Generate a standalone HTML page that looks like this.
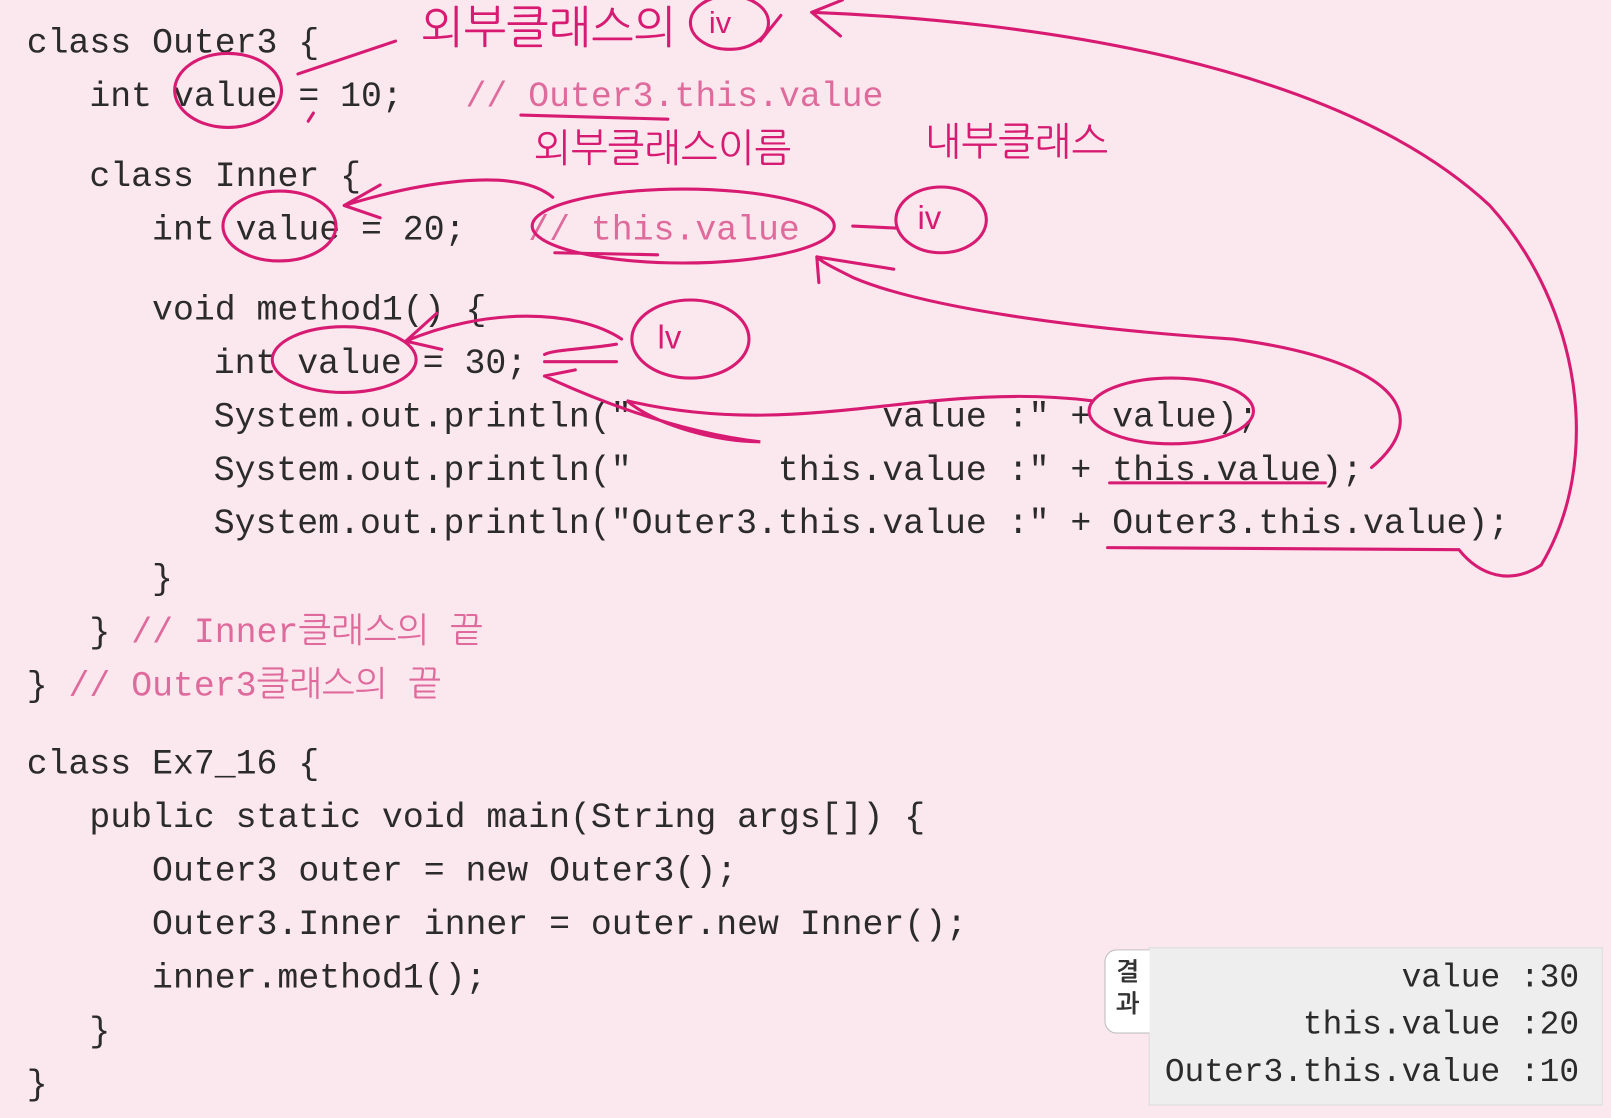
<!DOCTYPE html>
<html><head><meta charset="utf-8"><style>
html,body{margin:0;padding:0;width:1611px;height:1118px;overflow:hidden;background:#fbe7ee;}
#w{position:absolute;left:0;top:0;width:1568px;height:1088px;transform:scale(1.02742);transform-origin:0 0;}
.l{position:absolute;font-family:"Liberation Mono","NanumGothic",monospace;font-size:33.9px;color:#2b2b2b;white-space:pre;line-height:40px;height:40px;margin-top:3px;}
.c{color:#df6a9c;}
.h{position:absolute;font-family:"Liberation Sans","NanumGothic",sans-serif;color:#d81b72;white-space:pre;}
#res{position:absolute;left:1118px;top:922px;width:440px;height:152px;background:#eeeeee;border:1px solid #dcdcdc;}
#tab{position:absolute;left:1075px;top:924px;width:44px;height:82px;background:#fff;border:1px solid #bbb;border-right:none;border-radius:12px 0 0 12px;font-family:"NanumGothic",sans-serif;font-weight:bold;font-size:24px;line-height:31px;text-align:center;color:#333;padding-top:6px;box-sizing:border-box;}
.r{position:absolute;right:22px;font-family:"Liberation Mono",monospace;font-size:32px;color:#2b2b2b;white-space:pre;}
</style></head><body><div id="w">
<div class="l" style="left:26px;top:20px">class Outer3 {</div>
<div class="l" style="left:87px;top:72px">int value = 10;   <span class="c">// Outer3.this.value</span></div>
<div class="l" style="left:87px;top:150px">class Inner {</div>
<div class="l" style="left:148px;top:202px">int value = 20;   <span class="c">// this.value</span></div>
<div class="l" style="left:148px;top:280px">void method1() {</div>
<div class="l" style="left:208px;top:332px">int value = 30;</div>
<div class="l" style="left:208px;top:384px">System.out.println("            value :" + value);</div>
<div class="l" style="left:208px;top:436px">System.out.println("       this.value :" + this.value);</div>
<div class="l" style="left:208px;top:488px">System.out.println("Outer3.this.value :" + Outer3.this.value);</div>
<div class="l" style="left:148px;top:542px">}</div>
<div class="l" style="left:87px;top:594px">} <span class="c">// Inner클래스의 끝</span></div>
<div class="l" style="left:26px;top:646px">} <span class="c">// Outer3클래스의 끝</span></div>
<div class="l" style="left:26px;top:722px">class Ex7_16 {</div>
<div class="l" style="left:87px;top:774px">public static void main(String args[]) {</div>
<div class="l" style="left:148px;top:826px">Outer3 outer = new Outer3();</div>
<div class="l" style="left:148px;top:878px">Outer3.Inner inner = outer.new Inner();</div>
<div class="l" style="left:148px;top:930px">inner.method1();</div>
<div class="l" style="left:87px;top:982px">}</div>
<div class="l" style="left:26px;top:1034px">}</div>

<div id="res"><div class="r" style="top:10px">value :30</div><div class="r" style="top:56px">this.value :20</div><div class="r" style="top:102px">Outer3.this.value :10</div></div>
<div id="tab">결<br>과</div>

<div class="h" style="left:410px;top:0px;font-size:44px">외부클래스의</div>
<div class="h" style="left:520px;top:120px;font-size:38px">외부클래스이름</div>
<div class="h" style="left:900px;top:114px;font-size:38px">내부클래스</div>
<div class="h" style="left:690px;top:6px;font-size:30px">iv</div>
<div class="h" style="left:893px;top:194px;font-size:32px">iv</div>
<div class="h" style="left:640px;top:310px;font-size:32px">lv</div>

<svg style="position:absolute;left:0;top:0" width="1568" height="1088" viewBox="0 0 1568 1088" fill="none" stroke="#d81b72" stroke-width="3" stroke-linecap="round">
<ellipse cx="222" cy="88" rx="52" ry="36"/>
<path d="M290 72 L385 40"/>
<path d="M300 118 L305 110"/>
<ellipse cx="272" cy="220" rx="55" ry="34"/>
<ellipse cx="335" cy="350" rx="70" ry="32"/>
<ellipse cx="665" cy="220" rx="147" ry="36"/>
<ellipse cx="916" cy="214" rx="44" ry="32"/>
<ellipse cx="672" cy="330" rx="57" ry="38"/>
<ellipse cx="710" cy="22" rx="38" ry="26"/>
<ellipse cx="1140" cy="400" rx="80" ry="32"/>
<path d="M830 220 L872 222"/>
<path d="M507 112 L650 116"/>
<path d="M540 246 L640 248"/>
<path d="M538 192 C500 160 400 180 335 200 M335 200 L370 180 M335 200 L370 212"/>
<path d="M605 330 C560 300 470 300 395 332 M395 332 L425 305 M395 332 L430 340"/>
<path d="M600 352 L530 352 M600 335 C570 340 540 340 530 345"/>
<path d="M1062 390 C900 370 780 430 610 390 C640 415 700 430 740 430 C650 420 560 380 530 366 M530 366 L560 360"/>
<path d="M1335 455 C1400 400 1350 350 1200 330 C1050 320 900 300 830 270 C810 260 800 255 795 250 M795 250 L797 275 M795 250 L870 262"/>
<path d="M1080 470 L1290 470"/>
<path d="M1078 533 L1420 535 C1440 560 1470 570 1500 550 C1560 450 1540 300 1450 200 C1300 60 1000 20 790 12 M790 12 L820 0 M790 12 L818 35"/>
<path d="M740 40 L760 15"/>
</svg>
</div></body></html>
